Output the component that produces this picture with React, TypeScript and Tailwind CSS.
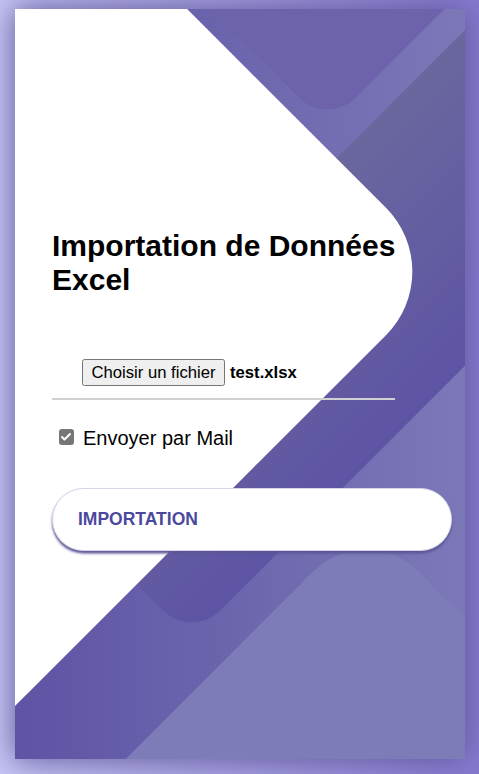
import { Check } from 'lucide-react';

function Background() {
  // formes décoratives du fond (carrés tournés à 45°)
  return (
    <svg className="absolute inset-0" width="450" height="750" viewBox="0 0 450 750">
      <defs>
        <linearGradient id="shape3" x1="1" y1="0" x2="0" y2="0">
          <stop offset="0" stopColor="#5D54A4" />
          <stop offset="1" stopColor="#6A679E" />
        </linearGradient>
      </defs>
      <rect x="137.5" y="525" width="250" height="500" rx="75" fill="#7E7BB9" transform="rotate(45 262.5 775)" />
      <rect x="212.5" y="-30" width="237.5" height="675" rx="40" fill="url(#shape3)" transform="rotate(45 331.25 307.5)" />
      <rect x="175" y="-215" width="275" height="275" rx="40" fill="#6C63AC" transform="rotate(45 312.5 -77.5)" />
      <path d="M -350 -62.5 H 210 A 90 90 0 0 1 300 27.5 V 587.5 H -350 Z" fill="#FFFFFF" transform="rotate(45 -25 262.5)" />
    </svg>
  );
}

export default function App() {
  return (
    <div className="min-h-screen flex justify-center pt-[9px] pb-[15px] bg-[linear-gradient(90deg,#C7C5F4,#8579D0)] font-['Liberation_Sans',Arial,sans-serif]">
      <div className="relative w-[450px] h-[750px] shrink-0 overflow-hidden bg-[linear-gradient(90deg,#5D54A4,#7C78B8)] shadow-[0_0_30px_#5C5696]">
        <Background />
        <div className="relative px-[37.5px] pt-[219.5px]">
          <h2 className="text-[30px] leading-[34.5px] font-bold text-black w-[375px]">
            Importation de Données Excel
          </h2>

          <div className="mt-[61.5px] w-[343px] pl-[30px] pb-[11.5px] border-b-[2.5px] border-[#D1D1D4] flex items-center">
            <span className="h-[27px] px-[8.5px] flex items-center border border-[#767676] rounded-[2.5px] bg-[#EFEFEF] text-[16.67px] text-black">
              Choisir un fichier
            </span>
            <span className="ml-[5px] text-[16.67px] font-bold text-black">test.xlsx</span>
          </div>

          <div className="mt-[26px] h-[23px] flex items-center">
            <span className="ml-[6.5px] w-[15.5px] h-[15.5px] rounded-[3px] bg-[#767676] flex items-center justify-center">
              <Check className="w-[12px] h-[12px] text-white" strokeWidth={4} />
            </span>
            <span className="ml-[9px] mt-[2px] text-[20px] leading-[23px] text-black">Envoyer par Mail</span>
          </div>

          <button className="mt-[39px] w-[400px] h-[63px] px-[25px] flex items-center bg-white rounded-[32.5px] border-[1.25px] border-[#D4D3E8] shadow-[0_2.5px_2.5px_#5C5696] text-[17.5px] font-bold uppercase text-[#4C489D]">
            Importation
          </button>
        </div>
      </div>
    </div>
  );
}
